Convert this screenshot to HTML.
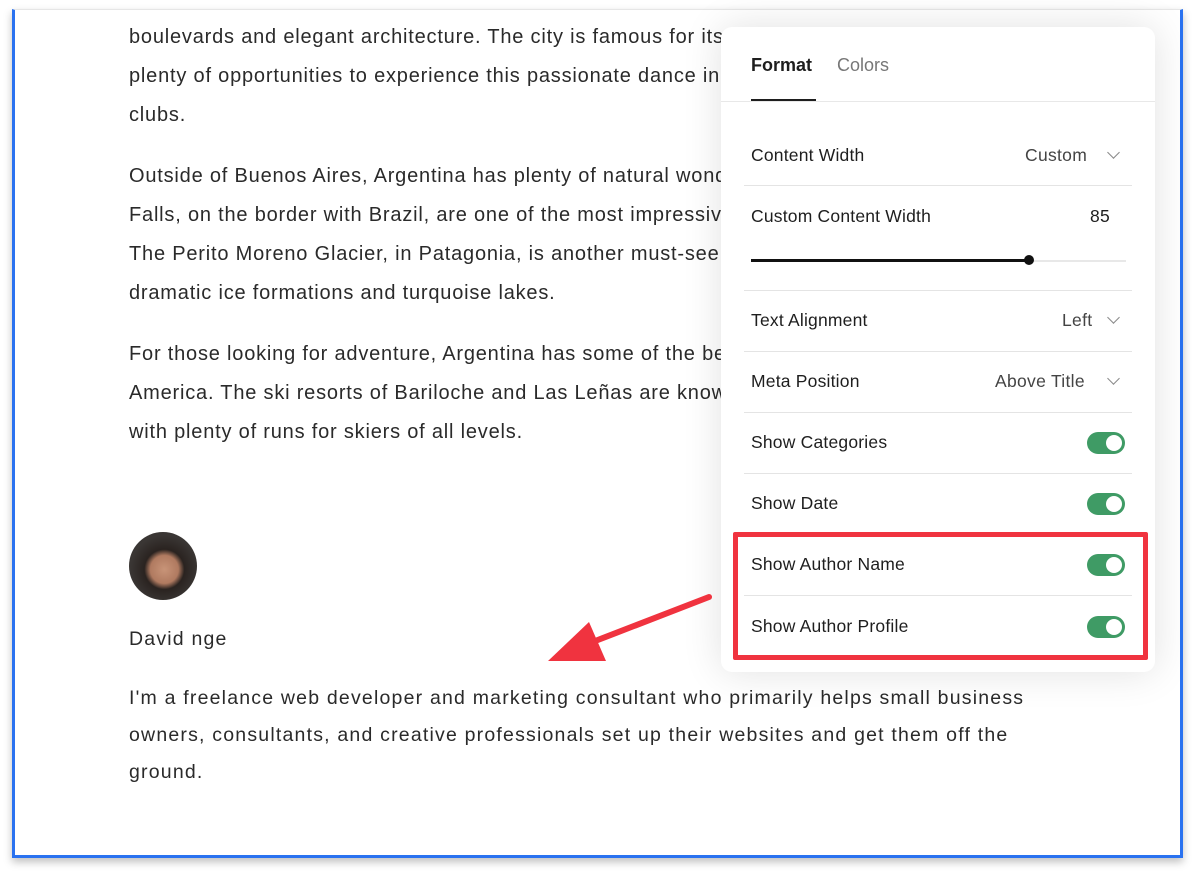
<!DOCTYPE html>
<html><head><meta charset="utf-8">
<style>
html,body{margin:0;padding:0;background:#fff;}
body{width:1200px;height:875px;position:relative;overflow:hidden;font-family:"Liberation Sans",sans-serif;}
.outer{position:absolute;left:0;top:0;width:1200px;height:875px;background:#fff;}
.frame{position:absolute;left:12px;top:9px;width:1171px;height:849px;box-sizing:border-box;border-left:3px solid #2a72f0;border-right:3px solid #2a72f0;border-bottom:3px solid #2a72f0;border-top:1px solid #e6e6e6;background:#fff;box-shadow:0 4px 8px rgba(0,0,0,0.25);overflow:hidden;}
.t{position:absolute;left:129px;white-space:nowrap;font-size:20px;color:#2a2a2a;letter-spacing:0.8px;}
.b{position:absolute;left:129px;white-space:nowrap;font-size:19.5px;color:#2a2a2a;letter-spacing:1.2px;}
.panel{position:absolute;left:721px;top:27px;width:434px;height:645px;background:#fff;border-radius:11px;box-shadow:0 0 40px rgba(0,0,0,0.12);}
.lbl{position:absolute;left:30px;font-size:17.5px;color:#1e1e1e;white-space:nowrap;letter-spacing:0.2px;}
.val{position:absolute;font-size:17.5px;color:#444;white-space:nowrap;letter-spacing:0.3px;}
.div{position:absolute;left:23px;width:388px;height:1px;background:#e4e4e4;}
.tog{position:absolute;left:366px;width:38px;height:22px;border-radius:11px;background:#3f9b65;}
.tog::after{content:"";position:absolute;right:3px;top:3px;width:16px;height:16px;border-radius:50%;background:#fff;}
.chev{position:absolute;width:8px;height:8px;border-right:1.5px solid #888;border-bottom:1.5px solid #888;transform:rotate(45deg);}
</style></head><body>
<div class="outer">
<div class="frame"></div>
<div class="t" style="top:26px">boulevards and elegant architecture. The city is famous for its tango, and visitors have</div>
<div class="t" style="top:65px">plenty of opportunities to experience this passionate dance in one of the many tango</div>
<div class="t" style="top:104px">clubs.</div>
<div class="t" style="top:165px">Outside of Buenos Aires, Argentina has plenty of natural wonders to explore. Iguazu</div>
<div class="t" style="top:204px">Falls, on the border with Brazil, are one of the most impressive waterfalls in the world.</div>
<div class="t" style="top:243px">The Perito Moreno Glacier, in Patagonia, is another must-see destination with its</div>
<div class="t" style="top:282px">dramatic ice formations and turquoise lakes.</div>
<div class="t" style="top:343px">For those looking for adventure, Argentina has some of the best skiing in South</div>
<div class="t" style="top:382px">America. The ski resorts of Bariloche and Las Leñas are known for their powder snow,</div>
<div class="t" style="top:421px">with plenty of runs for skiers of all levels.</div>

<div style="position:absolute;left:129px;top:532px;width:68px;height:68px;border-radius:50%;background:radial-gradient(circle at 52% 55%,#c89478 0,#b07a60 14px,#2a2320 20px,#3a3634 34px);"></div>
<div class="b" style="top:628px">David nge</div>
<div class="b" style="top:687px">I'm a freelance web developer and marketing consultant who primarily helps small business</div>
<div class="b" style="top:724px">owners, consultants, and creative professionals set up their websites and get them off the</div>
<div class="b" style="top:761px">ground.</div>

<div class="panel">
 <div style="position:absolute;left:30px;top:28px;font-size:18px;font-weight:bold;color:#1e1e1e;">Format</div>
 <div style="position:absolute;left:116px;top:28px;font-size:18px;color:#777;">Colors</div>
 <div style="position:absolute;left:30px;top:72px;width:65px;height:2px;background:#1e1e1e;"></div>
 <div style="position:absolute;left:0;top:74px;width:434px;height:1px;background:#e8e8e8;"></div>

 <div class="lbl" style="top:118px">Content Width</div>
 <div class="val" style="top:118px;left:304px">Custom</div>
 <div class="chev" style="left:388px;top:121px"></div>
 <div class="div" style="top:158px"></div>

 <div class="lbl" style="top:179px">Custom Content Width</div>
 <div class="val" style="top:179px;left:369px;color:#1e1e1e">85</div>
 <div style="position:absolute;left:30px;top:233px;width:375px;height:2px;background:#e8e8e8;"></div>
 <div style="position:absolute;left:30px;top:232px;width:278px;height:3px;background:#111;"></div>
 <div style="position:absolute;left:303px;top:228px;width:10px;height:10px;border-radius:50%;background:#111;"></div>
 <div class="div" style="top:263px"></div>

 <div class="lbl" style="top:283px">Text Alignment</div>
 <div class="val" style="top:283px;left:341px">Left</div>
 <div class="chev" style="left:388px;top:286px"></div>
 <div class="div" style="top:324px"></div>

 <div class="lbl" style="top:344px">Meta Position</div>
 <div class="val" style="top:344px;left:274px">Above Title</div>
 <div class="chev" style="left:388px;top:347px"></div>
 <div class="div" style="top:385px"></div>

 <div class="lbl" style="top:405px">Show Categories</div>
 <div class="tog" style="top:405px"></div>
 <div class="div" style="top:446px"></div>

 <div class="lbl" style="top:466px">Show Date</div>
 <div class="tog" style="top:466px"></div>
 <div class="div" style="top:507px"></div>

 <div class="lbl" style="top:527px">Show Author Name</div>
 <div class="tog" style="top:527px"></div>
 <div class="div" style="top:568px"></div>

 <div class="lbl" style="top:589px">Show Author Profile</div>
 <div class="tog" style="top:589px"></div>
</div>

<div style="position:absolute;left:733px;top:532px;width:415px;height:128px;box-sizing:border-box;border:5px solid #f0333f;border-radius:2px;"></div>

<svg style="position:absolute;left:0;top:0" width="1200" height="875">
 <line x1="709" y1="597" x2="590" y2="643" stroke="#f0333f" stroke-width="6" stroke-linecap="round"/>
 <polygon points="548,661 589,622 606,661" fill="#f0333f"/>
</svg>
</div>
</body></html>
